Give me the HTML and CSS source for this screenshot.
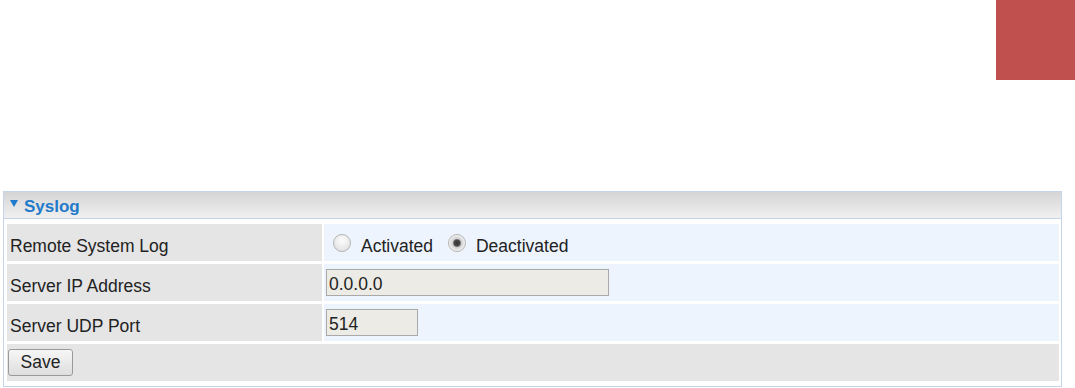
FILE: index.html
```html
<!DOCTYPE html>
<html lang="en">
<head>
    <meta charset="UTF-8">
    <meta name="viewport" content="width=device-width, initial-scale=1.0">
    <title>Syslog</title>
    <link rel="stylesheet" href="styles.css">
</head>
<body>
    <div class="topbar">
        <div class="brand-block"></div>
    </div>

    <!-- Syslog settings -->
    <div class="panel">
        <div class="panel-title"><span class="arrow"></span>Syslog</div>
        <form class="panel-body" id="syslogForm">
            <div class="label">Remote System Log</div>
            <div class="value">
                <label class="radio"><input type="radio" name="remoteLog" value="1"> Activated</label>
                <label class="radio"><input type="radio" name="remoteLog" value="0" checked> Deactivated</label>
            </div>

            <div class="label">Server IP Address</div>
            <div class="value">
                <input type="text" class="field field-ip" name="serverIp" value="0.0.0.0">
            </div>

            <div class="label">Server UDP Port</div>
            <div class="value">
                <input type="text" class="field field-port" name="serverPort" value="514">
            </div>

            <div class="actions">
                <button type="submit">Save</button>
            </div>
        </form>
    </div>
</body>
</html>
```

FILE: styles.css
```css
body {
    font-family: "Liberation Sans", Arial, sans-serif;
    margin: 0;
    padding: 0;
    background: white;
    color: #222;
}
.topbar {
    display: flex;
    justify-content: flex-end;
    height: 80px;
}
.brand-block {
    width: 79px;
    height: 80px;
    background-color: #c0504d;
}
.panel {
    margin: 111px 13px 0 3px;
    border: 1px solid #c4d5e8;
}
.panel-title {
    display: flex;
    align-items: center;
    height: 27px;
    padding: 3px 0 0 6px;
    box-sizing: border-box;
    background: linear-gradient(#d5d5d5, #f0f0f0);
    border-bottom: 1px solid #c4d5e8;
    color: #1f7acb;
    font-weight: bold;
    font-size: 17px;
}
.arrow {
    width: 0;
    height: 0;
    border-left: 4px solid transparent;
    border-right: 4px solid transparent;
    border-top: 7px solid #1f7acb;
    margin: 0 6px 6px 0;
}
.panel-body {
    display: grid;
    grid-template-columns: 315px 1fr;
    grid-auto-rows: 37px;
    column-gap: 2px;
    row-gap: 3px;
    padding: 5px 2px 5px 3px;
    margin: 0;
}
.label {
    display: flex;
    align-items: center;
    padding: 8px 0 0 3px;
    background-color: #e5e5e5;
    font-size: 17.5px;
}
.value {
    display: flex;
    align-items: center;
    padding-left: 2px;
    background-color: #edf4fd;
}
.radio {
    display: flex;
    align-items: center;
    font-size: 17.5px;
    margin-left: 7px;
    margin-right: 8px;
    padding-top: 8px;
}
.radio input {
    appearance: none;
    width: 18px;
    height: 18px;
    margin: 0 10px 7px 0;
    border: 1px solid #b4b4b4;
    border-radius: 50%;
    background: radial-gradient(circle at 50% 35%, #fdfdfd, #dcdcdc);
}
.radio input:checked {
    background: radial-gradient(circle, #333 0, #4a4a4a 3px, #cfcfcf 4.5px, #f4f4f4 8px);
}
.field {
    height: 27px;
    box-sizing: border-box;
    padding: 3px 2px 0;
    border: 1px solid #a9a9a9;
    background-color: #ecebe5;
    font-family: inherit;
    font-size: 17.5px;
    color: #222;
}
.field-ip {
    width: 283px;
}
.field-port {
    width: 92px;
}
.actions {
    grid-column: 1 / 3;
    display: flex;
    align-items: center;
    padding-left: 1px;
    background-color: #e5e5e5;
}
button {
    width: 65px;
    height: 27px;
    border: 1px solid #9a9a9a;
    border-radius: 3px;
    background: linear-gradient(#f6f6f6, #dedede);
    font-family: inherit;
    font-size: 17.5px;
    color: #222;
    padding: 0;
    cursor: pointer;
}
```
